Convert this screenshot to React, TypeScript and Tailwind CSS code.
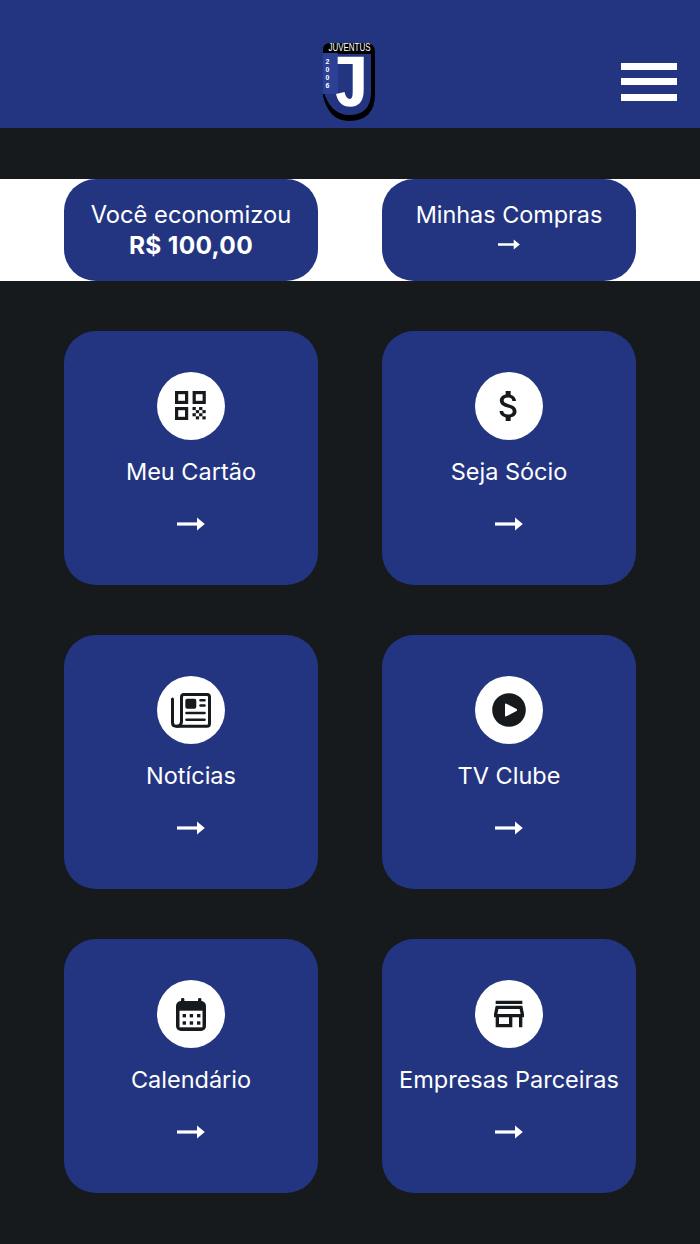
import { MdAttachMoney, MdOutlineStore } from "react-icons/md";
import type { ReactNode } from "react";

const INK = "#161a1d";

function Arrow({ className = "", width = 28 }: { className?: string; width?: number }) {
  return (
    <svg width={width} height={width / 2} viewBox="0 0 28 14" className={className}>
      <rect x="0" y="5.4" width="22" height="3.2" fill="#fff" />
      <path d="M20 0.6 L27.8 7 L20 13.4 Z" fill="#fff" />
    </svg>
  );
}

function QrIcon() {
  const cells: [number, number][] = [];
  for (let r = 0; r < 4; r++) {
    for (let c = 0; c < 4; c++) {
      if ((r + c) % 2 === 0) cells.push([17.5 + c * 3.3, 16 + r * 3.1]);
    }
  }
  return (
    <svg width="31" height="29" viewBox="0 0 31 29" className="mt-[-2px] ml-[-1px]">
      <rect x="1.6" y="1.6" width="10" height="9.8" fill="none" stroke={INK} strokeWidth="3.2" />
      <rect x="19.2" y="1.6" width="10" height="9.8" fill="none" stroke={INK} strokeWidth="3.2" />
      <rect x="1.6" y="17.6" width="10" height="9.8" fill="none" stroke={INK} strokeWidth="3.2" />
      {cells.map(([x, y]) => (
        <rect key={`${x}-${y}`} x={x} y={y} width="3.3" height="3.1" fill={INK} />
      ))}
    </svg>
  );
}

function NewsIcon() {
  return (
    <svg width="40" height="35" viewBox="0 0 40 35" fill="none" stroke={INK} strokeWidth="3" strokeLinecap="round">
      <path d="M10.5 28 V4 Q10.5 1.5 13 1.5 H36 Q38.5 1.5 38.5 4 V30.5 Q38.5 33.2 36 33.2 H5 Q1.5 33.2 1.5 29.5 V6" />
      <path d="M10.5 28 Q10.5 33 6 33.2" />
      <rect x="14.3" y="5.7" width="11" height="10" rx="2" fill={INK} stroke="none" />
      <path d="M29.5 7.3 H33.5 M29.5 12.5 H33.5 M15.5 20 H33.5 M15.5 26.7 H33.5" strokeWidth="2.6" />
    </svg>
  );
}

function PlayIcon() {
  return (
    <svg width="34" height="34" viewBox="0 0 34 34">
      <circle cx="17" cy="17" r="16.8" fill={INK} />
      <path d="M13 11.5 Q13 10 14.4 10.7 L24.5 16 Q25.8 17 24.5 18 L14.4 23.3 Q13 24 13 22.5 Z" fill="#fff" />
    </svg>
  );
}

function CalendarIcon() {
  const xs = [8.3, 15.4, 22.7];
  const ys = [17.7, 25];
  return (
    <svg width="30" height="33" viewBox="0 0 30 33">
      <rect x="5" y="0" width="3.4" height="6" rx="1.4" fill={INK} />
      <rect x="22" y="0" width="3.4" height="6" rx="1.4" fill={INK} />
      <rect x="0" y="3" width="30" height="30" rx="5" fill={INK} />
      <rect x="3.5" y="12.7" width="23" height="16.6" fill="#fff" />
      {xs.map((x) =>
        ys.map((y) => <rect key={`${x}-${y}`} x={x - 1.7} y={y - 1.7} width="3.4" height="3.4" fill={INK} />)
      )}
    </svg>
  );
}

function Logo() {
  return (
    <svg width="60" height="84" viewBox="0 0 60 84" className="ml-[-2px]">
      <path d="M4 10 Q4 3 11 3 H47 Q56 3 56 12 V54 Q56 81 30 81 Q10 81 4 56 Z" fill="#000" />
      <path d="M6 14 H52 V52 Q52 75 30 75 Q14 75 6 56 Z" fill="#233581" />
      <rect x="4" y="13" width="15" height="41" fill="#2c4096" />
      <path d="M18.7 16.7 H44.7 V50 Q44.7 66.7 31 66.7 Q20 66.7 17 54 L25.5 52 Q27 59 31 59 Q33.7 59 33.7 52 V24 H18.7 Z" fill="#fff" />
      <text x="30.5" y="9.2" transform="scale(1 1.25)" textAnchor="middle" fill="#fff" fontSize="8" fontFamily="'Liberation Sans', sans-serif">JUVENTUS</text>
      <g fill="#fff" fontSize="7" fontWeight="700" fontFamily="'Liberation Sans', sans-serif" textAnchor="middle">
        <text x="8.5" y="24">2</text>
        <text x="8.5" y="32">0</text>
        <text x="8.5" y="40">0</text>
        <text x="8.5" y="48">6</text>
      </g>
    </svg>
  );
}

function Card({ icon, label }: { icon: ReactNode; label: string }) {
  return (
    <div className="h-[254px] rounded-[32px] bg-[#233581] flex flex-col items-center pt-[41px] text-white">
      <div className="w-[68px] h-[68px] rounded-full bg-white flex items-center justify-center text-[#161a1d]">{icon}</div>
      <div className="mt-[15px] text-[23.5px] leading-[34px] whitespace-nowrap">{label}</div>
      <Arrow className="mt-[28px]" />
    </div>
  );
}

export default function App() {
  return (
    <div className="w-[700px] h-[1244px] bg-[#161a1d] font-['Inter','Liberation_Sans',sans-serif] overflow-hidden">
      <header className="h-[128px] bg-[#233581] grid grid-cols-[1fr_auto_1fr] items-center pt-[35px]">
        <div />
        <Logo />
        <div className="flex justify-end pr-[23px]">
          <div className="w-[56px] flex flex-col gap-[8.5px]">
            <div className="h-[7px] bg-white" />
            <div className="h-[7px] bg-white" />
            <div className="h-[7px] bg-white" />
          </div>
        </div>
      </header>
      <div className="mt-[51px] h-[102px] bg-white px-16 grid grid-cols-2 gap-x-16">
        <div className="rounded-[32px] bg-[#233581] text-white flex flex-col items-center justify-center text-[23.7px] leading-[30px] pb-[1px]">
          <span>Você economizou</span>
          <span className="font-bold text-[24.5px] tracking-[0.3px]">R$ 100,00</span>
        </div>
        <div className="rounded-[32px] bg-[#233581] text-white flex flex-col items-center justify-center text-[23.4px] leading-[30px] pb-[1px]">
          <span>Minhas Compras</span>
          <Arrow width={22} className="mt-[9px] mb-[10px]" />
        </div>
      </div>
      <div className="mt-[50px] px-16 grid grid-cols-2 gap-x-16 gap-y-[50px]">
        <Card icon={<QrIcon />} label="Meu Cartão" />
        <Card icon={<MdAttachMoney size={40} />} label="Seja Sócio" />
        <Card icon={<NewsIcon />} label="Notícias" />
        <Card icon={<PlayIcon />} label="TV Clube" />
        <Card icon={<CalendarIcon />} label="Calendário" />
        <Card icon={<MdOutlineStore size={40} />} label="Empresas Parceiras" />
      </div>
    </div>
  );
}
